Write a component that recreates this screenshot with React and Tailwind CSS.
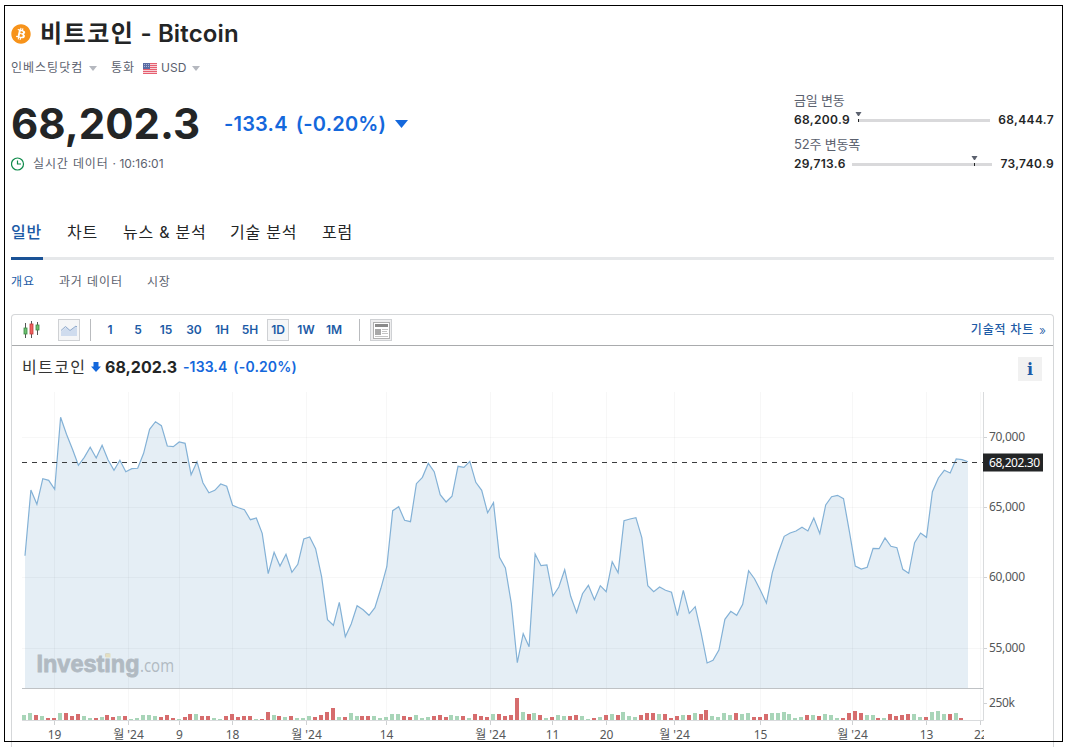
import clsx from 'clsx';
import { FaBitcoin } from 'react-icons/fa';

const STEP = 5.931;

// close prices as pixel heights * 3, one point per day
const CLOSES = [
  497, 300, 343, 266, 271, 298, 82, 133, 177, 226, 202, 172, 204, 166, 209, 241, 211, 245, 236, 235,
  190, 118, 95, 107, 168, 170, 156, 160, 254, 215, 278, 308, 301, 282, 289, 346, 353, 359, 389, 384,
  430, 551, 487, 528, 493, 547, 523, 447, 441, 476, 560, 689, 706, 637, 740, 702, 647, 659, 676, 653,
  595, 530, 362, 350, 391, 395, 281, 262, 220, 245, 314, 336, 319, 229, 232, 214, 277, 301, 368, 338,
  502, 534, 640, 818, 731, 770, 492, 527, 525, 618, 591, 539, 619, 668, 611, 586, 629, 587, 605, 515,
  548, 392, 387, 383, 443, 587, 605, 591, 601, 607, 677, 601, 670, 650, 728, 819, 811, 780, 688, 664,
  676, 643, 542, 566, 601, 639, 548, 489, 439, 429, 423, 412, 423, 384, 431, 345, 320, 316, 326, 425,
  528, 537, 532, 475, 476, 444, 469, 473, 538, 550, 458, 429, 442, 305, 264, 241, 249, 207, 209, 215,
];

// g = up day, r = down day
const VOLUMES =
  'g5 g7 r5 g4 r2 r2 g7 r7 r4 r6 g4 g2 r2 g3 r5 r3 g4 r4 g1 g2 g5 g5 g4 r3 r5 r2 g1 r3 r6 g6 r4 r4 g2 g1 r4 r6 r3 r4 r4 g1 ' +
  'r1 r8 g5 r4 g3 r4 g2 g2 g4 r3 r5 r8 r12 g3 r3 g7 g4 r4 r4 g4 g2 g3 g6 g6 r4 r3 g5 g2 g3 r4 r5 r3 g5 g4 r4 g2 r6 r4 r3 g6 ' +
  'r6 r4 r5 r22 g8 r6 g7 r5 g2 r3 g5 g4 r4 r5 g4 g1 r2 g3 r5 g6 r5 g8 g4 g3 r5 r7 r7 g6 r6 r2 r4 g5 r5 g7 r6 r10 g4 g3 g7 g5 ' +
  'r7 g6 g7 r3 r3 r6 g7 g7 g8 g6 g2 g3 r5 g5 r4 g6 g5 g2 r2 r7 r9 r7 g5 g5 r2 g2 r6 r4 r5 r6 g6 g3 r3 g8 g9 g6 r6 g7 r2';

const MONTH = "월 '24";
const DATES = [
  [42.5, '19'], [116.5, MONTH], [167.5, '9'], [220.5, '18'], [294.5, MONTH], [374.5, '14'], [478.5, MONTH],
  [540.5, '11'], [594.5, '20'], [662.5, MONTH], [748.5, '15'], [840.5, MONTH], [914.5, '13'], [968.5, '22'],
];

const PRICES = [
  [47.5, '70,000'],
  [117.5, '65,000'],
  [187.5, '60,000'],
  [258.5, '55,000'],
];

const TABS = [
  ['일반', 'w-8'],
  ['차트', 'w-8'],
  ['뉴스 & 분석', 'w-[83px]'],
  ['기술 분석', 'w-[68px]'],
  ['포럼', 'w-8'],
];

const INTERVALS = ['1', '5', '15', '30', '1H', '5H', '1D', '1W', '1M'];

function Caret({ className }) {
  return (
    <svg className={className} viewBox="0 0 10 6" preserveAspectRatio="none" fill="currentColor">
      <path d="M0 0h10L5 6z" />
    </svg>
  );
}

function UsFlag() {
  return (
    <svg className="w-[14px] h-[11px]" viewBox="0 0 14 11">
      <rect width="14" height="11" fill="#f7d0d6" />
      {[0, 2, 4, 6, 8, 10].map((y) => (
        <rect key={y} y={y} width="14" height="1" fill="#e65f70" />
      ))}
      <rect width="7" height="6" fill="#5a6ba3" />
      <path d="M1 1.5h5M1 3.5h5" stroke="#a9b4d4" strokeDasharray="1 1" />
    </svg>
  );
}

function Range({ label, low, high, track, marker }) {
  return (
    <div className="h-11">
      <div className="h-[18px] leading-[17px] text-[13px] tracking-[-0.2px] text-[#5b616e]">{label}</div>
      <div className="flex h-[18px] items-center text-[12px] leading-[18px] font-semibold tracking-[0.35px] text-[#232526]">
        <span className="pt-0.5">{low}</span>
        <svg className={clsx('mr-2 ml-auto h-[18px] overflow-visible', track)}>
          <rect y="9" width="100%" height="3" fill="#d9d9db" />
          <g transform={`translate(${marker} 0)`}>
            <path d="M-3 2h6L0.5 6h-1z" fill="#5b616e" />
            <path d="M0 9v3" stroke="#232526" />
          </g>
        </svg>
        <span className="pt-0.5">{high}</span>
      </div>
    </div>
  );
}

function Header() {
  return (
    <header className="flex h-[197px] justify-between">
      <div>
        <div className="flex h-8 items-center pt-px">
          <FaBitcoin className="mr-[9px] size-5 text-[#f7931a]" />
          <h1 className="text-[24px] leading-8 font-semibold text-[#232526]">
            <span className="tracking-[1.5px]">비트코인</span> <span className="tracking-[0.15px]">- Bitcoin</span>
          </h1>
        </div>
        <div className="mt-[9px] flex h-5 items-center text-[12px] text-[#5b616e]">
          <span className="w-[72px] whitespace-nowrap tracking-[1px]">인베스팅닷컴</span>
          <Caret className="ml-[6px] h-[5px] w-[8px] text-[#b5b8bf]" />
          <span className="ml-[14px] w-[25px] tracking-[1px] whitespace-nowrap">통화</span>
          <span className="ml-[7px]"><UsFlag /></span>
          <span className="ml-[4px]">USD</span>
          <Caret className="ml-[6px] h-[5px] w-[8px] text-[#b5b8bf]" />
        </div>
        <div className="mt-[20px] flex h-[52px] items-center">
          <span className="w-[189px] text-[42px] leading-[52px] font-bold text-[#232526]">68,202.3</span>
          <span className="ml-[24px] text-[20px] font-semibold tracking-[0.2px] text-[#1468dc]">-133.4</span>
          <span className="ml-[8px] text-[20px] font-semibold tracking-[0.2px] text-[#1468dc]">(-0.20%)</span>
          <Caret className="ml-[9px] h-[8px] w-[13px] text-[#1468dc]" />
        </div>
        <div className="mt-[4px] flex h-5 items-center text-[12px] text-[#5b616e]">
          <svg className="size-[14px]" viewBox="0 0 14 14" fill="none" stroke="#0e8a4a" strokeWidth="1.2">
            <circle cx="6.5" cy="7" r="6" />
            <path d="M6.5 3.5V7H10" />
          </svg>
          <span className="ml-2 tracking-[0.85px]">실시간 데이터</span>
          <span className="ml-1">· 10:16:01</span>
        </div>
      </div>
      <div className="w-[260px] pt-[75px]">
        <Range label="금일 변동" low="68,200.9" high="68,444.7" track="w-[132px]" marker={0.5} />
        <Range label="52주 변동폭" low="29,713.6" high="73,740.9" track="w-[140px]" marker={122.5} />
      </div>
    </header>
  );
}

function Toolbar() {
  return (
    <div className="flex h-[31px] items-center border-b border-[#a9abad] pl-[11px] pr-[7px]">
      <svg className="h-[18px] w-[18px]" viewBox="0 0 18 18">
        <path d="M2.5 2v15M8.5 0v17M14.5 1v13" stroke="#555" />
        <rect x="1" y="7" width="3" height="6" fill="#6cc070" stroke="#3c8a42" strokeWidth=".8" />
        <rect x="7" y="3" width="3" height="10" fill="#f0625f" stroke="#c33a3a" strokeWidth=".8" />
        <rect x="13" y="4" width="3" height="5" fill="#6cc070" stroke="#3c8a42" strokeWidth=".8" />
      </svg>
      <span className="ml-[17px] flex size-[22px] items-center justify-center border border-[#cfd1d4] bg-[#f5f6f7]">
        <svg className="h-[14px] w-[18px]" viewBox="0 0 18 14">
          <path d="M1 8.5l5-4.5 4 3.5 6-4 1 1V13H1z" fill="#cfdcee" />
          <path d="M1 7.5l4.5-4 4.5 4 6-4.5 1 1" fill="none" stroke="#8ea9cc" />
        </svg>
      </span>
      <span className="ml-[10px] h-[22px] w-px bg-[#b9bbbe]" />
      <div className="ml-[8px] flex gap-[6px] text-[12px] font-semibold text-[#1d5ba6]">
        {INTERVALS.map((label) => (
          <span
            key={label}
            className={clsx(
              'flex h-[22px] w-[22px] items-center justify-center border',
              label === '1D' ? 'border-[#cfd1d4] bg-[#f5f6f7]' : 'border-transparent',
            )}
          >
            {label}
          </span>
        ))}
      </div>
      <span className="ml-[14px] h-[22px] w-px bg-[#b9bbbe]" />
      <span className="ml-[10px] flex size-[22px] items-center justify-center border border-[#cfd1d4] bg-[#eeeeef]">
        <svg className="size-[17px]" viewBox="0 0 17 17">
          <rect x=".5" y=".5" width="16" height="16" fill="#fff" stroke="#b0b0b0" />
          <path d="M2 3.5h13" stroke="#8a8a8a" strokeWidth="3" />
          <rect x="2" y="7" width="6" height="6" fill="#a8a8a8" />
          <path d="M9 7.5h6M9 9.5h5M9 11.5h6M2 14.5h13" stroke="#c4c4c4" />
        </svg>
      </span>
      <span className="ml-auto text-[12px] font-medium tracking-[0.8px] text-[#1d5ba6]">기술적 차트</span>
      <span className="ml-[5px] text-[13px] leading-4 font-light text-[#1d5ba6]">»</span>
    </div>
  );
}

function Watermark() {
  return (
    <g fill="#b1bac2">
      <text x="24.5" y="282" fontSize="23" fontWeight="700" textLength="103" lengthAdjust="spacingAndGlyphs" className="[font-family:'Liberation_Sans',sans-serif]" stroke="#b1bac2" strokeWidth=".8">
        Investing
      </text>
      <text x="128" y="282" fontSize="18" textLength="34" lengthAdjust="spacingAndGlyphs" className="[font-family:'Open_Sans',sans-serif]">
        .com
      </text>
      <rect x="93.5" y="263.5" width="5" height="4" fill="#e3dfc2" />
    </g>
  );
}

function Chart() {
  const line = CLOSES.map((v, i) => `${(13 + i * STEP).toFixed(1)},${(v / 3).toFixed(1)}`).join(' ');
  const bars = VOLUMES.split(' ');

  return (
    <svg
      className="block h-[357px] w-[1041px] [font-family:'Noto_Sans','Noto_Sans_CJK_KR',sans-serif]"
      viewBox="0 0 1041 357"
      fontSize="12"
      fill="#555759"
    >
      <polygon points={`13,298 ${line} 956,298`} fill="#e5eef5" />
      <g stroke="#000" strokeOpacity=".03">
        {PRICES.map(([y]) => <path key={y} d={`M10 ${y}H971`} />)}
        {DATES.map(([x]) => <path key={x} d={`M${x} 2V330`} />)}
      </g>
      <Watermark />
      <polyline points={line} fill="none" stroke="#83b1d6" strokeWidth="1.2" />
      <path d="M10 72.5H971" stroke="#3a3c3e" strokeDasharray="5 5" />
      <path d="M10 298.5H971" stroke="#bfc2c5" />
      <path d="M10 330.5H971.5V2" fill="none" stroke="#d9dbdd" />
      {bars.map((bar, i) => {
        const h = Number(bar.slice(1));
        return (
          <rect
            key={i}
            x={Math.round(10.4 + i * STEP)}
            y={330 - h}
            width="4"
            height={h}
            fill={bar[0] === 'g' ? '#a8d5b8' : '#d66c6d'}
          />
        );
      })}
      {DATES.map(([x, label]) => (
        <g key={x}>
          <path d={`M${x} 331v4`} stroke="#cfd1d3" />
          {label === '22' ? (
            <svg x="960" y="335" width="12" height="20">
              <text x="2" y="14">{label}</text>
            </svg>
          ) : (
            <text x={x} y="349" textAnchor="middle">{label}</text>
          )}
        </g>
      ))}
      {PRICES.map(([y, label]) => (
        <g key={y}>
          <path d={`M972 ${y}h3`} stroke="#cfd1d3" />
          <text x="977" y={y + 3.5} textLength="36">{label}</text>
        </g>
      ))}
      <path d="M972 313.5h3" stroke="#cfd1d3" />
      <text x="977" y="317" textLength="26">250k</text>
      <rect x="971" y="63.5" width="60" height="18" fill="#232526" />
      <text x="977" y="77" fill="#fff" textLength="51">68,202.30</text>
    </svg>
  );
}

export default function App() {
  return (
    <div className="relative h-[747px] w-[1065px] overflow-hidden bg-white pt-[17px] pl-[11px] [font-family:Inter,'Noto_Sans_CJK_KR',sans-serif]">
      <div className="w-[1043px]">
        <Header />

        <nav className="flex h-[46px] gap-6 border-b-3 border-[#e6e8ea] text-[16px] text-[#232526]">
          {TABS.map(([label, width], i) => (
            <span
              key={label}
              className={clsx(
                'h-[46px] pt-[7px] leading-[22px] tracking-[0.75px] whitespace-nowrap',
                width,
                i === 0 && 'border-b-3 border-[#1a5296] font-medium text-[#1d5ba6]',
              )}
            >
              {label}
            </span>
          ))}
        </nav>

        <nav className="flex h-[54px] gap-6 pt-[12px] text-[12px] leading-5 tracking-[0.9px] text-[#5b616e]">
          <span className="text-[#1d5ba6]">개요</span>
          <span>과거 데이터</span>
          <span>시장</span>
        </nav>

        <section className="rounded-t border border-b-0 border-[#d5d7d9]">
          <Toolbar />
          <div className="flex h-[44px] items-start justify-between pr-[11px] pl-[10px]">
            <div className="flex h-[41px] items-center">
              <span className="w-[64px] text-[16px] tracking-[1.4px] whitespace-nowrap text-[#333]">비트코인</span>
              <svg className="ml-[5px] h-[10px] w-[10px]" viewBox="0 0 10 10">
                <path d="M2.5 0h5v4.5H10L5 10 0 4.5h2.5z" fill="#1468dc" />
              </svg>
              <span className="ml-[4px] w-[72px] text-[16px] font-bold text-[#232526]">68,202.3</span>
              <span className="ml-[6px] text-[14px] font-semibold tracking-[0.1px] text-[#1468dc]">-133.4</span>
              <span className="ml-[6px] text-[14px] font-semibold tracking-[0.15px] text-[#1468dc]">(-0.20%)</span>
            </div>
            <span className="mt-[11px] flex size-6 items-center justify-center bg-[#f1f1f1] pt-0.5 text-[16px] font-bold text-[#1d5ba6] [font-family:'DejaVu_Serif',serif]">
              i
            </span>
          </div>
          <Chart />
        </section>
      </div>

      <div className="pointer-events-none absolute top-[5px] left-[4px] h-[737px] w-[1059px] border border-black" />
    </div>
  );
}
